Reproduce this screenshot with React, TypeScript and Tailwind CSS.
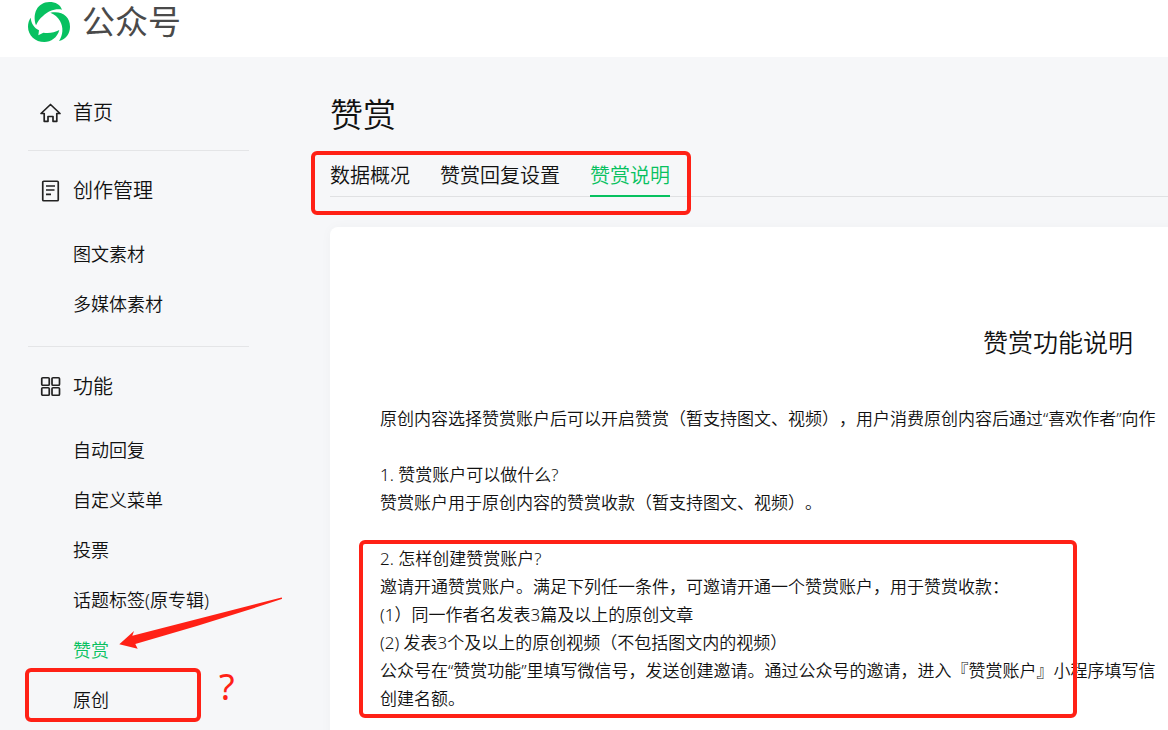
import React from "react";

const LINK = "flex h-[50px] items-center pl-[45px] text-lg leading-none";

function Logo() {
  return (
    <svg viewBox="12 5 126 120" className="h-10 w-[42px]" fill="#07c160" aria-hidden="true">
      <path d="M36 75C24 40 40 6 76 5c19 0 33 8 38 23C94 24 72 32 57 47c-10 8-16 17-21 28z" />
      <path d="M79 37c35-7 59 11 59 42 0 20-11 37-33 43 12-17 14-41 3-60-7-12-16-20-29-25z" />
      <path d="M20 52c2 18 10 30 25 38l-2 15 15-8c17 3 33 0 48-8-6 23-25 36-45 36C34 125 12 105 12 79c0-11 3-20 8-27z" />
    </svg>
  );
}

function HomeIcon() {
  return (
    <svg viewBox="0 0 22 22" className="size-[22px]" fill="none" stroke="#222" strokeWidth="1.700" strokeLinejoin="round" aria-hidden="true">
      <path d="M11.500 2.500 2 11.500h3.200v7.800h3.800v-4.800h5v4.800h3.800v-7.800H21z" />
    </svg>
  );
}

function DocIcon() {
  return (
    <svg viewBox="0 0 22 22" className="size-[22px]" fill="none" stroke="#222" strokeWidth="1.700" aria-hidden="true">
      <rect x="3.750" y="1.250" width="15.500" height="19.500" rx="1" />
      <path d="M7 6h9M7 10h8.500M7 14.300h5" />
    </svg>
  );
}

function GridIcon() {
  return (
    <svg viewBox="0 0 22 22" className="size-[22px]" fill="none" stroke="#222" strokeWidth="1.700" aria-hidden="true">
      <rect x="2.750" y="1.750" width="7.500" height="7.500" rx="1" />
      <rect x="13" y="1.750" width="7.500" height="7.500" rx="1" />
      <rect x="2.750" y="11.750" width="7.500" height="7.500" rx="1" />
      <rect x="13" y="11.750" width="7.500" height="7.500" rx="1" />
    </svg>
  );
}

function Section({ icon, title, items, active }: { icon: React.ReactNode; title: string; items: string[]; active?: string }) {
  return (
    <section className="mb-[17px] border-t border-[#e4e5e7]">
      <h2 className="flex h-[78px] items-center gap-3 pt-[2px] pl-[11px] text-xl leading-none">
        {icon}
        {title}
      </h2>
      <ul>
        {items.map((item) => (
          <li key={item}>
            <a href="#" className={item === active ? `${LINK} text-[#07c160]` : LINK}>
              {item}
            </a>
          </li>
        ))}
      </ul>
    </section>
  );
}

export default function App() {
  return (
    <div className="relative h-screen overflow-hidden bg-[#f6f7f9] font-['Noto_Sans','Noto_Sans_CJK_SC',sans-serif] font-[350] text-[#111] [text-spacing-trim:space-all]">
      <header className="flex h-[57px] items-start gap-3 bg-white pt-[2px] pl-7 text-[#4a4a4a]">
        <Logo />
        <span className="text-[33px] leading-10 font-normal">公众号</span>
      </header>

      <div className="flex">
        <nav className="w-[249px] shrink-0 pt-[25px] pl-7">
          <a href="#" className="mb-2 flex h-[60px] items-center gap-3 pt-[2px] pl-[11px] text-xl leading-none">
            <HomeIcon />
            首页
          </a>
          <Section icon={<DocIcon />} title="创作管理" items={["图文素材", "多媒体素材"]} />
          <Section
            icon={<GridIcon />}
            title="功能"
            items={["自动回复", "自定义菜单", "投票", "话题标签(原专辑)", "赞赏", "原创"]}
            active="赞赏"
          />
        </nav>

        <main className="ml-[81px] min-w-[1456px] flex-1 pt-[34px]">
          <h1 className="text-[33px] leading-[48px]">赞赏</h1>
          <div className="mt-3 flex h-[46px] gap-[30px] border-b border-[#e0e1e3] text-xl leading-none">
            <button type="button" className="h-[46px] border-b-2 border-transparent pt-[6px]">数据概况</button>
            <button type="button" className="h-[46px] border-b-2 border-transparent pt-[6px]">赞赏回复设置</button>
            <button type="button" className="h-[46px] border-b-2 border-[#07c160] pt-[6px] text-[#07c160]">赞赏说明</button>
          </div>

          <article className="mt-[30px] rounded-lg bg-white px-[50px] pt-[95px] pb-12 text-[17px] leading-7 whitespace-nowrap shadow-[0_0_12px_rgba(0,0,0,0.03)]">
            <h2 className="mb-[43px] text-center text-[25px] leading-10">赞赏功能说明</h2>
            <p className="mb-7">原创内容选择赞赏账户后可以开启赞赏（暂支持图文、视频），用户消费原创内容后通过“喜欢作者”向作</p>
            <div className="mb-7">
              <h3>1. 赞赏账户可以做什么?</h3>
              <p>赞赏账户用于原创内容的赞赏收款（暂支持图文、视频）。</p>
            </div>
            <div>
              <h3>2. 怎样创建赞赏账户?</h3>
              <p>邀请开通赞赏账户。满足下列任一条件，可邀请开通一个赞赏账户，用于赞赏收款：</p>
              <p>(1）同一作者名发表3篇及以上的原创文章</p>
              <p>(2) 发表3个及以上的原创视频（不包括图文内的视频）</p>
              <p>公众号在“赞赏功能”里填写微信号，发送创建邀请。通过公众号的邀请，进入『赞赏账户』小程序填写信</p>
              <p>创建名额。</p>
            </div>
          </article>
        </main>
      </div>

      <div className="pointer-events-none absolute top-[151px] left-[311px] h-16 w-[380px] rounded-md border-4 border-[#ff2116]" />
      <div className="pointer-events-none absolute top-[540px] left-[359px] h-[178px] w-[718px] rounded-md border-4 border-[#ff2116]" />
      <div className="pointer-events-none absolute top-[668px] left-[25px] h-[54px] w-[176px] rounded-md border-4 border-[#ff2116]" />
      <svg viewBox="0 0 164 54" className="pointer-events-none absolute top-[596px] left-[119px] h-[54px] w-[164px]" fill="#ff2116" aria-hidden="true">
        <path d="M.3 48.300 15 35l-1.700 4.700L162.500 1.400Q163.500 2 162.700 3 Q90 27 16.300 48l2.400 4.700z" />
      </svg>
      <span className="absolute top-[665px] left-[219px] text-[36px] leading-11 font-normal text-[#ff2116]">?</span>
    </div>
  );
}
